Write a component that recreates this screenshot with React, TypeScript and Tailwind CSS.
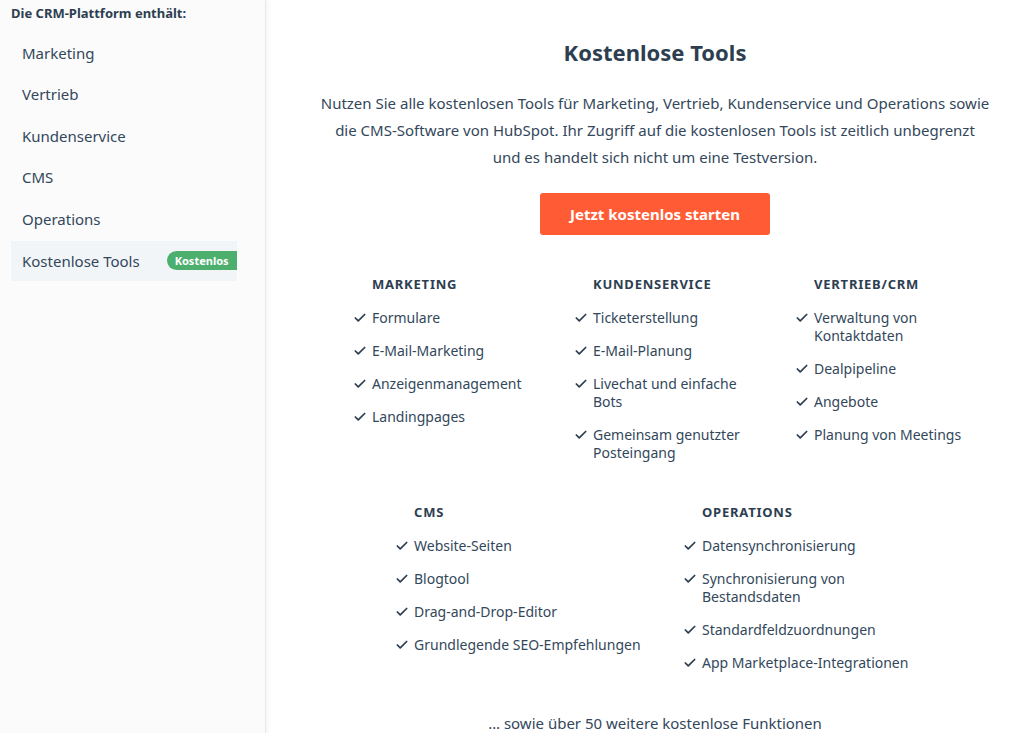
import { Check } from 'lucide-react';

const navItems = ['Marketing', 'Vertrieb', 'Kundenservice', 'CMS', 'Operations'];

const topColumns = [
  { title: 'MARKETING', items: ['Formulare', 'E-Mail-Marketing', 'Anzeigenmanagement', 'Landingpages'] },
  {
    title: 'KUNDENSERVICE',
    items: ['Ticketerstellung', 'E-Mail-Planung', 'Livechat und einfache Bots', 'Gemeinsam genutzter Posteingang'],
  },
  {
    title: 'VERTRIEB/CRM',
    items: ['Verwaltung von Kontaktdaten', 'Dealpipeline', 'Angebote', 'Planung von Meetings'],
  },
];

const bottomColumns = [
  {
    title: 'CMS',
    items: ['Website-Seiten', 'Blogtool', 'Drag-and-Drop-Editor', 'Grundlegende SEO-Empfehlungen'],
  },
  {
    title: 'OPERATIONS',
    items: [
      'Datensynchronisierung',
      'Synchronisierung von Bestandsdaten',
      'Standardfeldzuordnungen',
      'App Marketplace-Integrationen',
    ],
  },
];

function FeatureColumn({ title, items, width }: { title: string; items: string[]; width: string }) {
  return (
    <div className={`${width} shrink-0`}>
      <h3 className="pl-[18px] text-[13px] font-bold tracking-[0.06em] leading-[18px] text-[#2d3e50]">{title}</h3>
      <ul className="mt-[16px] flex flex-col gap-[15px]">
        {items.map((item) => (
          <li key={item} className="flex items-start gap-[5px] text-[14px] leading-[18px] text-[#33475b]">
            <Check className="w-[14px] h-[14px] mt-[2px] -ml-[1px] shrink-0 text-[#2d3e50]" strokeWidth={3} />
            <span>{item}</span>
          </li>
        ))}
      </ul>
    </div>
  );
}

export default function App() {
  return (
    <div className="flex h-[733px] w-[1024px] overflow-hidden bg-white font-['Noto_Sans',sans-serif] text-[#33475b]">
      {/* Sidebar */}
      <aside className="w-[266px] shrink-0 bg-[#fbfbfc] border-r border-[#e3e8ee] shadow-[2px_0_4px_rgba(45,62,80,0.06)] pl-[11px] pt-[4px]">
        <p className="text-[13px] font-bold leading-[18px] text-[#2d3e50]">Die CRM-Plattform enthält:</p>
        <nav className="mt-[10px] flex flex-col w-[226px]">
          {navItems.map((item) => (
            <div key={item} className="h-[41.6px] flex items-center pl-[11px] text-[15px] text-[#33475b]">
              {item}
            </div>
          ))}
          <div className="mt-[1px] h-[40px] flex items-center pl-[11px] bg-[#f2f5f8] overflow-hidden text-[15px] text-[#33475b]">
            <span className="shrink-0">Kostenlose Tools</span>
            <span className="ml-[27px] shrink-0 rounded-l-[10px] bg-[#4caf6e] pl-[8px] pr-[10px] text-[11px] font-bold leading-[19px] text-white">
              Kostenlos
            </span>
          </div>
        </nav>
      </aside>

      {/* Main */}
      <main className="flex-1 flex flex-col items-center pl-[20px] pt-[36px]">
        <h1 className="shrink-0 text-[22px] font-bold leading-[32px] text-[#2d3e50]">Kostenlose Tools</h1>
        <p className="shrink-0 mt-[22px] text-center text-[15px] leading-[27px] text-[#33475b]">
          Nutzen Sie alle kostenlosen Tools für Marketing, Vertrieb, Kundenservice und Operations sowie
          <br />
          die CMS-Software von HubSpot. Ihr Zugriff auf die kostenlosen Tools ist zeitlich unbegrenzt
          <br />
          und es handelt sich nicht um eine Testversion.
        </p>
        <button className="shrink-0 mt-[22px] h-[42px] w-[230px] rounded-[3px] bg-[#ff5c35] text-[15px] font-bold text-white">
          Jetzt kostenlos starten
        </button>

        <div className="shrink-0 mt-[40px] ml-[18px] flex gap-[43px]">
          {topColumns.map((col) => (
            <FeatureColumn key={col.title} title={col.title} items={col.items} width="w-[178px]" />
          ))}
        </div>

        <div className="shrink-0 mt-[41px] ml-[18px] flex gap-[40px]">
          {bottomColumns.map((col) => (
            <FeatureColumn key={col.title} title={col.title} items={col.items} width="w-[248px]" />
          ))}
        </div>

        <p className="shrink-0 mt-[40px] text-[15px] leading-[22px] text-[#33475b]">
          … sowie über 50 weitere kostenlose Funktionen
        </p>
      </main>
    </div>
  );
}
